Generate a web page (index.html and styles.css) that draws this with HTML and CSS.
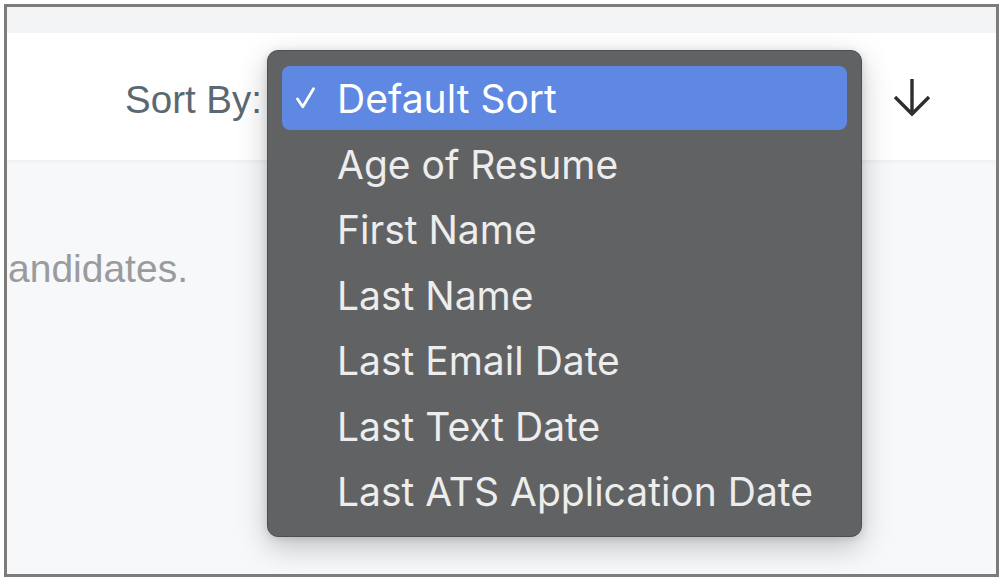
FILE: index.html
```html
<!DOCTYPE html>
<html lang="en">
<head>
<meta charset="utf-8">
<title>Sort By</title>
<link rel="stylesheet" href="styles.css">
</head>
<body>
<div class="frame">
  <div class="top-strip"></div>
  <header class="toolbar">
    <span class="sort-label">Sort By:</span>
    <div class="sort-select">
      <ul class="menu" role="listbox">
        <li class="menu-item selected" role="option">
          <svg class="check" viewBox="0 0 19 22" width="19" height="22" aria-hidden="true"><polyline points="1.5,12 6.8,19.8 17.5,1.8" fill="none" stroke="#fff" stroke-width="2.8" stroke-linecap="round" stroke-linejoin="round"/></svg>
          <span>Default Sort</span>
        </li>
        <li class="menu-item" role="option"><span>Age of Resume</span></li>
        <li class="menu-item" role="option"><span>First Name</span></li>
        <li class="menu-item" role="option"><span>Last Name</span></li>
        <li class="menu-item" role="option"><span>Last Email Date</span></li>
        <li class="menu-item" role="option"><span>Last Text Date</span></li>
        <li class="menu-item" role="option"><span>Last ATS Application Date</span></li>
      </ul>
    </div>
    <button class="dir-btn" type="button" aria-label="Sort descending">
      <svg viewBox="0 0 40 40" width="40" height="40" aria-hidden="true"><path d="M20 2 V37 M3 20 L20 37 L37 20" fill="none" stroke="#2e2e2e" stroke-width="3.4" stroke-linejoin="miter"/></svg>
    </button>
  </header>
  <main class="content">
    <p class="empty-text">andidates.</p>
  </main>
</div>
</body>
</html>
```
FILE: styles.css
```css
html, body {
  margin: 0;
  padding: 0;
  background: #ffffff;
}

body {
  font-family: "Liberation Sans", Arial, sans-serif;
}

.frame {
  margin: 4px 0 0 4px;
  width: 995px;
  height: 573px;
  box-sizing: border-box;
  border: 3px solid #7c7c7c;
  background: #f7f8fa;
  display: flex;
  flex-direction: column;
  overflow: hidden;
}

.top-strip {
  height: 26px;
  flex: none;
  background: #f3f4f6;
}

.toolbar {
  height: 127px;
  flex: none;
  background: #ffffff;
  display: flex;
  align-items: center;
  justify-content: flex-end;
  padding-right: 64px;
  box-shadow: 0 2px 5px rgba(0, 0, 0, 0.04);
  position: relative;
  z-index: 2;
}

.sort-label {
  font-size: 38.5px;
  color: #5c6871;
  margin-right: 5px;
  margin-top: 7px;
}

.sort-select {
  width: 595px;
  align-self: stretch;
  position: relative;
}

.menu {
  position: absolute;
  top: 17px;
  left: 0;
  width: 595px;
  box-sizing: border-box;
  margin: 0;
  padding: 15px 14px 11px;
  list-style: none;
  background: #616264;
  border: 1px solid #4d4e50;
  border-radius: 11px;
  box-shadow: 0 10px 30px rgba(0, 0, 0, 0.22), 0 2px 8px rgba(0, 0, 0, 0.12);
  font-family: Inter, "Liberation Sans", Arial, sans-serif;
  font-size: 39px;
  color: #ededed;
}

.menu-item {
  height: 65.5px;
  display: flex;
  align-items: center;
  padding-left: 55px;
  position: relative;
  border-radius: 8px;
}

.menu-item.selected {
  height: 64px;
  margin-bottom: 1.5px;
  background: #5e88e2;
  color: #ffffff;
}

.check {
  position: absolute;
  left: 14px;
  top: 21px;
}

.dir-btn {
  margin-left: 30px;
  padding: 0;
  border: 0;
  background: transparent;
  width: 40px;
  height: 40px;
  display: block;
}

.dir-btn svg {
  display: block;
}

.content {
  flex: 1;
  padding-top: 87px;
}

.empty-text {
  margin: 0 0 0 1px;
  font-size: 39px;
  line-height: 44px;
  color: #9a9b9d;
}
```
